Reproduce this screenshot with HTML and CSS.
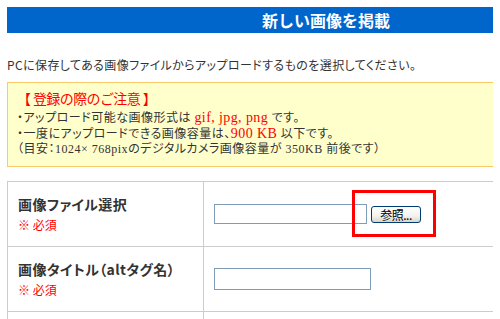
FILE: index.html
```html
<!DOCTYPE html>
<html lang="ja">
<head>
<meta charset="utf-8">
<title>新しい画像を掲載</title>
<link rel="stylesheet" href="styles.css">
</head>
<body>
<div class="page">
  <h2 class="title">新しい画像を掲載</h2>
  <p class="lead">PCに保存してある画像ファイルからアップロードするものを選択してください。</p>
  <div class="notice">
    <p class="notice-head">【 登録の際のご注意 】</p>
    <p class="notice-line">・アップロード可能な画像形式は <span class="em">gif, jpg, png</span> です。</p>
    <p class="notice-line">・一度にアップロードできる画像容量は、<span class="em">900 KB</span> 以下です。</p>
    <p class="notice-line">（目安：1024× 768pixのデジタルカメラ画像容量が 350KB 前後です）</p>
  </div>
  <table class="form">
    <tr>
      <th class="label-cell">
        <span class="label">画像ファイル選択</span>
        <span class="req">※ 必須</span>
      </th>
      <td class="field-cell">
        <div class="file-field">
          <input class="text-input file-path" type="text">
          <button class="browse" type="button">参照...</button>
          <span class="highlight"></span>
        </div>
      </td>
    </tr>
    <tr>
      <th class="label-cell">
        <span class="label">画像タイトル（altタグ名）</span>
        <span class="req">※ 必須</span>
      </th>
      <td class="field-cell">
        <input class="text-input title-input" type="text">
      </td>
    </tr>
    <tr>
      <th class="label-cell"></th>
      <td class="field-cell"></td>
    </tr>
  </table>
</div>
</body>
</html>
```

FILE: styles.css
```css
html, body {
  overflow: hidden;
}

body {
  margin: 7px;
  background: #fff;
  color: #333;
  font-family: "Noto Sans CJK JP", "Noto Sans", sans-serif;
  font-size: 12px;
  font-feature-settings: "palt";
}

.page {
  width: 638px;
}

.title {
  margin: 0;
  height: 26px;
  line-height: 26px;
  background: #0066cc;
  color: #fff;
  font-size: 16px;
  font-weight: bold;
  text-align: center;
  font-feature-settings: normal;
}

.lead {
  margin: 24px 0 0;
  line-height: 16px;
  letter-spacing: 0.4px;
}

.notice {
  margin-top: 9px;
  padding: 7px 9px 9px;
  border: 1px solid #f9c96a;
  background: #ffffcc;
  font-family: "Liberation Serif", "Noto Sans CJK JP", serif;
}

.notice p {
  margin: 0;
}

.notice-head {
  color: #ff0000;
  font-size: 14px;
  line-height: 17px;
  margin-bottom: 3px !important;
  font-family: "Noto Sans CJK JP", sans-serif;
  font-feature-settings: normal;
  letter-spacing: -0.6px;
}

.notice-line {
  font-size: 12px;
  line-height: 15px;
  letter-spacing: 0.5px;
}

.em {
  color: #ff0000;
  font-size: 14px;
  letter-spacing: 0.4px;
}

.form {
  margin-top: 14px;
  width: 100%;
  border-collapse: collapse;
}

.form tr {
  height: 65px;
}

.label-cell,
.field-cell {
  border: 1px solid #cccccc;
  padding: 0 10px;
  vertical-align: middle;
  text-align: left;
}

.label-cell {
  width: 175px;
}

.label {
  display: block;
  font-size: 14px;
  line-height: 16px;
  font-weight: bold;
  color: #333;
  letter-spacing: 0.4px;
}

.req {
  display: block;
  margin-top: 5px;
  font-size: 12px;
  line-height: 16px;
  font-weight: normal;
  color: #ff0000;
}

.file-field {
  position: relative;
  display: flex;
  align-items: center;
  gap: 4px;
}

.text-input {
  box-sizing: border-box;
  margin: 0;
  border: 1px solid #7f9db9;
  background: #fff;
  padding: 0 2px;
  font-size: 12px;
}

.file-path {
  width: 153px;
  height: 20px;
}

.title-input {
  display: block;
  width: 157px;
  height: 22px;
}

.browse {
  box-sizing: border-box;
  width: 50px;
  height: 17px;
  margin: 0;
  padding: 0;
  border: 1px solid #003c74;
  border-radius: 3px;
  background: linear-gradient(#ffffff, #f3f2ee 60%, #d8d4ca);
  color: #000;
  font-family: "Noto Sans CJK JP", sans-serif;
  font-size: 12px;
  line-height: 15px;
  letter-spacing: -0.5px;
}

.highlight {
  position: absolute;
  left: 138px;
  top: -14px;
  width: 84px;
  height: 47px;
  box-sizing: border-box;
  border: 3px solid #ff0000;
  pointer-events: none;
}
```
